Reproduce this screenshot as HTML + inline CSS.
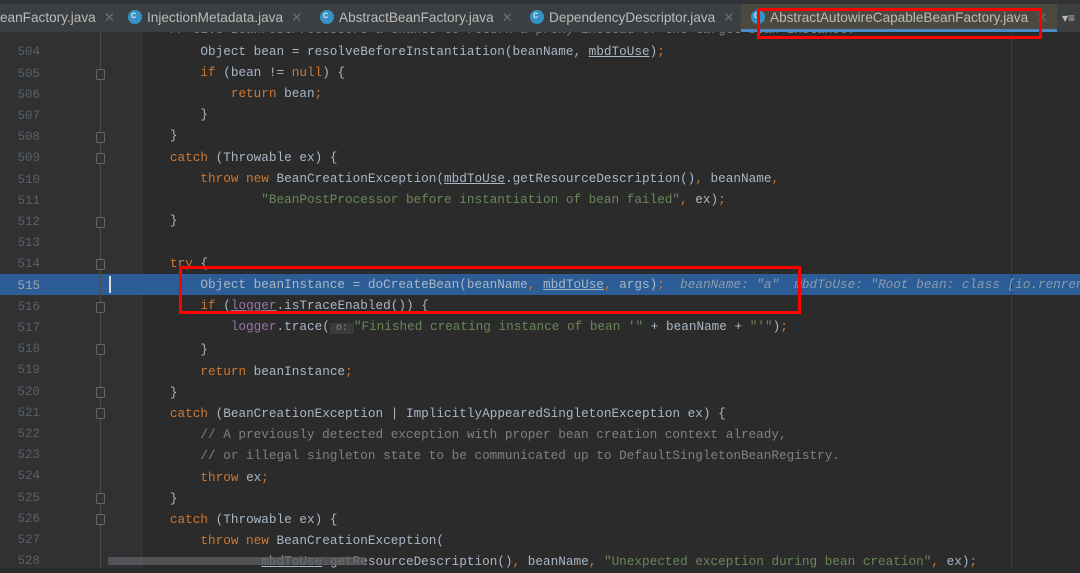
<!DOCTYPE html>
<html><head><meta charset="utf-8"><style>
*{margin:0;padding:0;box-sizing:border-box}
body{width:1080px;height:568px;overflow:hidden;background:#2b2b2b;position:relative;font-family:"Liberation Mono",monospace}
.tabs{position:absolute;left:0;top:0;width:1080px;height:32px;background:#3c3f41;border-top:4px solid #313335;font-family:"Liberation Sans",sans-serif;font-size:13.6px;color:#bbbbbb}
.tab{position:absolute;top:0;height:28px;line-height:28px;white-space:nowrap}
.ic{display:inline-block;width:14px;height:14px;border-radius:50%;background:#3592c4;vertical-align:-2px;margin-right:5px;position:relative}
.ic:after{content:"c";position:absolute;left:3px;top:-8px;font-size:10px;color:#fff}
.x{color:#6e6e6e;margin-left:8px}
.active{background:#4c4a3f;border-bottom:3px solid #4a88c7}
.gut{position:absolute;left:0;top:32px;width:142px;height:536px;background:#2f3133;border-right:1px solid #3a3a3a}
.ln{position:absolute;left:0;width:40px;text-align:right;color:#5c6063;font-size:12.5px}
.code{position:absolute;left:109px;width:971px;overflow:hidden;font-size:12.7px;color:#a9b7c6;white-space:pre;line-height:21.2px}
.row{position:absolute;left:0;height:21.2px;line-height:21.2px;font-size:12.5px}
.k{color:#cc7832}.s{color:#6a8759}.c{color:#808080}.f{color:#9876aa}.u{text-decoration:underline}.h{color:#8a9bb0;font-style:italic}
.red{position:absolute;border:3px solid #ff0000}
</style></head><body>
<div style="position:absolute;left:0;top:274px;width:1080px;height:21px;background:#2d5d96"></div>
<div class="gut"></div>
<div style="position:absolute;left:0;top:274px;width:142px;height:21px;background:#2d5d96"></div>
<div style="position:absolute;left:100px;top:32px;width:1px;height:536px;background:#4a4a4a"></div>
<div style="position:absolute;left:1011px;top:32px;width:1px;height:536px;background:#3a3a3a"></div>
<div style="position:absolute;left:109px;top:276px;width:2px;height:17px;background:#ddd"></div>
<div id="lns"></div>
<div class="code" style="top:-1.8px">
<span class="c">        // Give BeanPostProcessors a chance to return a proxy instead of the target bean instance.</span>
            Object bean = resolveBeforeInstantiation(beanName, <span class="u">mbdToUse</span>)<span class="k">;</span>
            <span class="k">if</span> (bean != <span class="k">null</span>) {
                <span class="k">return</span> bean<span class="k">;</span>
            }
        }
        <span class="k">catch</span> (Throwable ex) {
            <span class="k">throw new</span> BeanCreationException(<span class="u">mbdToUse</span>.getResourceDescription()<span class="k">,</span> beanName<span class="k">,</span>
                    <span class="s">"BeanPostProcessor before instantiation of bean failed"</span><span class="k">,</span> ex)<span class="k">;</span>
        }

        <span class="k">try</span> {
            Object beanInstance = doCreateBean(beanName<span class="k">,</span> <span class="u">mbdToUse</span><span class="k">,</span> args)<span class="k">;</span>  <span class="h">beanName: "a"  mbdToUse: "Root bean: class [io.renren.Test]"</span>
            <span class="k">if</span> (<span class="f u">logger</span>.isTraceEnabled()) {
                <span class="f">logger</span>.trace(<span style="background:#3a3a3a;color:#888;font-size:10px"> o: </span><span class="s">"Finished creating instance of bean '"</span> + beanName + <span class="s">"'"</span>)<span class="k">;</span>
            }
            <span class="k">return</span> beanInstance<span class="k">;</span>
        }
        <span class="k">catch</span> (BeanCreationException | ImplicitlyAppearedSingletonException ex) {
<span class="c">            // A previously detected exception with proper bean creation context already,</span>
<span class="c">            // or illegal singleton state to be communicated up to DefaultSingletonBeanRegistry.</span>
            <span class="k">throw</span> ex<span class="k">;</span>
        }
        <span class="k">catch</span> (Throwable ex) {
            <span class="k">throw new</span> BeanCreationException(
                    <span class="u">mbdToUse</span>.getResourceDescription()<span class="k">,</span> beanName<span class="k">,</span> <span class="s">"Unexpected exception during bean creation"</span><span class="k">,</span> ex)<span class="k">;</span>
</div>
<div style="position:absolute;left:108px;top:557px;width:257px;height:8px;background:#5a5d5f;opacity:.8"></div>
<div class="tabs">
<div class="tab" style="left:0">eanFactory.java<span class="x">✕</span></div>
<div class="tab" style="left:128px"><span class="ic"></span>InjectionMetadata.java<span class="x">✕</span></div>
<div class="tab" style="left:320px"><span class="ic"></span>AbstractBeanFactory.java<span class="x">✕</span></div>
<div class="tab" style="left:530px"><span class="ic"></span>DependencyDescriptor.java<span class="x">✕</span></div>
<div class="tab active" style="left:741px;width:316px;padding-left:10px"><span class="ic"></span>AbstractAutowireCapableBeanFactory.java<span class="x">✕</span></div>
<div class="tab" style="left:1062px;font-size:12px">▾≡</div>
</div>
<div class="red" style="left:757px;top:8px;width:285px;height:31px"></div>
<div class="red" style="left:179px;top:266px;width:622px;height:48px"></div>
<script>
var h='';for(var i=504;i<=528;i++){var t=53-10.6+(i-504)*21.2;h+='<div class="row ln" style="top:'+t+'px;'+(i==515?'color:#a4a3a3':'')+'">'+i+'</div>';}
var f=[505,508,509,512,514,516,518,520,521,525,526];
f.forEach(function(i){var t=53-10.6+(i-504)*21.2+5;h+='<div style="position:absolute;left:96px;top:'+t+'px;width:9px;height:11px;border:1px solid #666;border-radius:2px;background:#313335"></div>';});
document.getElementById('lns').innerHTML=h;
</script>
</body></html>
